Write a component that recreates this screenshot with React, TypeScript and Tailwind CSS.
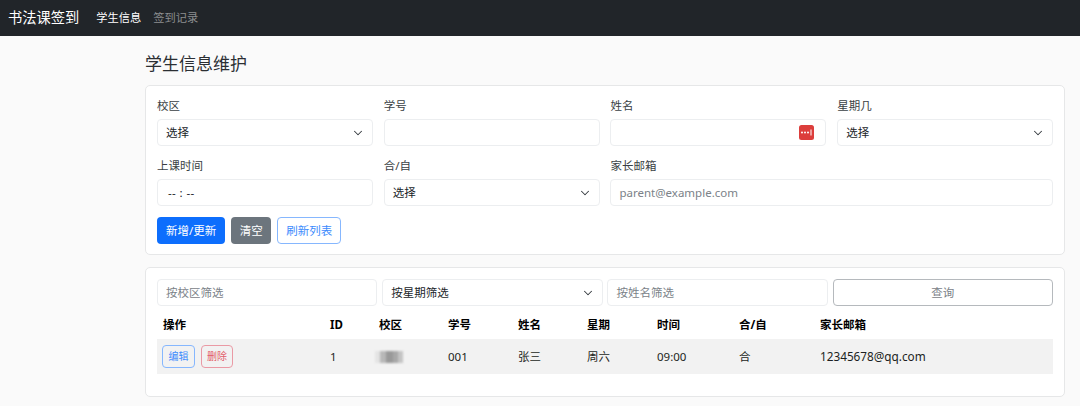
import { ChevronDown } from "lucide-react";

const fieldBox = "h-[27px] w-full rounded-[4px] border border-[#eceef0] bg-white px-[8px] text-[11.5px] text-[#212529] outline-none placeholder:text-[#7b8288]";

function Label({ text }: { text: string }) {
  return <label className="mb-[5px] block h-[16px] text-[11.5px] leading-[16px] text-[#3a3f44]">{text}</label>;
}

function SelectBox({ text }: { text: string }) {
  return (
    <div className={fieldBox + " flex items-center justify-between"}>
      <span>{text}</span>
      <ChevronDown className="-mr-[1px] h-[14px] w-[14px] text-[#343a40]" strokeWidth={1.75} />
    </div>
  );
}

function Field({ label, children, className = "" }: { label: string; children: React.ReactNode; className?: string }) {
  return (
    <div className={className}>
      <Label text={label} />
      {children}
    </div>
  );
}

// password manager badge inside the name input
function KeyBadge() {
  return (
    <svg viewBox="0 0 15 15" className="absolute right-[12px] top-[6px] h-[15px] w-[15px]">
      <rect width="15" height="15" rx="2.5" fill="#dc3e3c" />
      <circle cx="3" cy="7.5" r="1" fill="#fff" />
      <circle cx="6" cy="7.5" r="1" fill="#fff" />
      <circle cx="9" cy="7.5" r="1" fill="#fff" />
      <rect x="11.5" y="4.5" width="1" height="6" fill="#fff" />
    </svg>
  );
}

const heads = ["操作", "ID", "校区", "学号", "姓名", "星期", "时间", "合/自", "家长邮箱"];

export default function App() {
  return (
    <div className="min-h-[406px] bg-[#fafafa] text-[#212529] [font-family:'Noto_Sans','Noto_Sans_CJK_SC',sans-serif]">
      <nav className="flex h-[36px] items-center bg-[#212529] pl-[8px]">
        <span className="mr-[17px] text-[14.25px] text-white">书法课签到</span>
        <a className="mr-[12px] text-[11.25px] text-white">学生信息</a>
        <a className="text-[11.25px] text-[#8c8e90]">签到记录</a>
      </nav>

      <main className="pl-[145px] pr-[15px]">
        <h1 className="flex h-[49px] items-center pt-[7px] text-[17px] font-normal text-[#2b2f33]">学生信息维护</h1>

        <section className="mb-[12px] rounded-[5px] border border-[#e6e7e8] bg-white px-[11px] pb-[10px] pt-[12px]">
          <div className="grid grid-cols-4 gap-x-[10.9px] gap-y-[12px]">
            <Field label="校区"><SelectBox text="选择" /></Field>
            <Field label="学号"><input className={fieldBox} /></Field>
            <Field label="姓名">
              <div className="relative">
                <input className={fieldBox} />
                <KeyBadge />
              </div>
            </Field>
            <Field label="星期几"><SelectBox text="选择" /></Field>
            <Field label="上课时间">
              <div className={fieldBox + " flex items-center pl-[10px] tracking-[0.4px] text-[#555b60]"}>-- : --</div>
            </Field>
            <Field label="合/自"><SelectBox text="选择" /></Field>
            <Field label="家长邮箱" className="col-span-2">
              <input className={fieldBox} placeholder="parent@example.com" />
            </Field>
          </div>
          <div className="mt-[11px] flex gap-[6px]">
            <button className="h-[27px] rounded-[4px] bg-[#0d6efd] px-[9px] text-[11.5px] text-white">新增/更新</button>
            <button className="h-[27px] w-[40px] rounded-[4px] bg-[#6c757d] text-[11.5px] text-white">清空</button>
            <button className="h-[27px] rounded-[4px] border border-[#86b7fe] bg-white px-[8px] text-[11.5px] text-[#3d8bfd]">刷新列表</button>
          </div>
        </section>

        <section className="rounded-[5px] border border-[#e6e7e8] bg-white px-[11px] pb-[22px] pt-[11px]">
          <div className="mb-[5px] grid grid-cols-4 gap-x-[4.9px]">
            <input className={fieldBox} placeholder="按校区筛选" />
            <SelectBox text="按星期筛选" />
            <input className={fieldBox} placeholder="按姓名筛选" />
            <button className="h-[27px] rounded-[4px] border border-[#b5b9bd] bg-white text-[11.5px] text-[#7b8288]">查询</button>
          </div>

          <table className="w-full table-fixed border-collapse text-left text-[11.5px]">
            <colgroup>
              <col className="w-[167px]" />
              <col className="w-[49px]" />
              <col className="w-[69px]" />
              <col className="w-[70px]" />
              <col className="w-[69px]" />
              <col className="w-[70px]" />
              <col className="w-[82px]" />
              <col className="w-[81px]" />
              <col />
            </colgroup>
            <thead>
              <tr className="h-[28px]">
                {heads.map((h) => (
                  <th key={h} className="px-[6px] font-bold text-black">{h}</th>
                ))}
              </tr>
            </thead>
            <tbody>
              <tr className="h-[35px] bg-[#f2f2f2] text-[#1c1f22]">
                <td className="px-[5px]">
                  <div className="flex gap-[6px]">
                    <button className="h-[23px] w-[33px] rounded-[4px] border border-[#86b7fe] text-[10px] text-[#3d8bfd]">编辑</button>
                    <button className="h-[23px] w-[32px] rounded-[4px] border border-[#ea9aa5] text-[10px] text-[#e35d6a]">删除</button>
                  </div>
                </td>
                <td className="px-[6px]">1</td>
                <td className="px-[2px]">
                  {/* mosaic over the campus name */}
                  <div className="flex h-[12px] w-[28px] overflow-hidden blur-[1px]">
                    <span className="w-[5px] bg-[#e4e4e4]" />
                    <span className="w-[6px] bg-[#b8b8b8]" />
                    <span className="w-[7px] bg-[#999999]" />
                    <span className="w-[5px] bg-[#a8a8a8]" />
                    <span className="w-[5px] bg-[#c4c4c4]" />
                  </div>
                </td>
                <td className="px-[6px]">001</td>
                <td className="px-[6px]">张三</td>
                <td className="px-[6px]">周六</td>
                <td className="px-[6px]">09:00</td>
                <td className="px-[6px]">合</td>
                <td className="px-[6px] text-[11.75px]">12345678@qq.com</td>
              </tr>
            </tbody>
          </table>
        </section>
      </main>
    </div>
  );
}
